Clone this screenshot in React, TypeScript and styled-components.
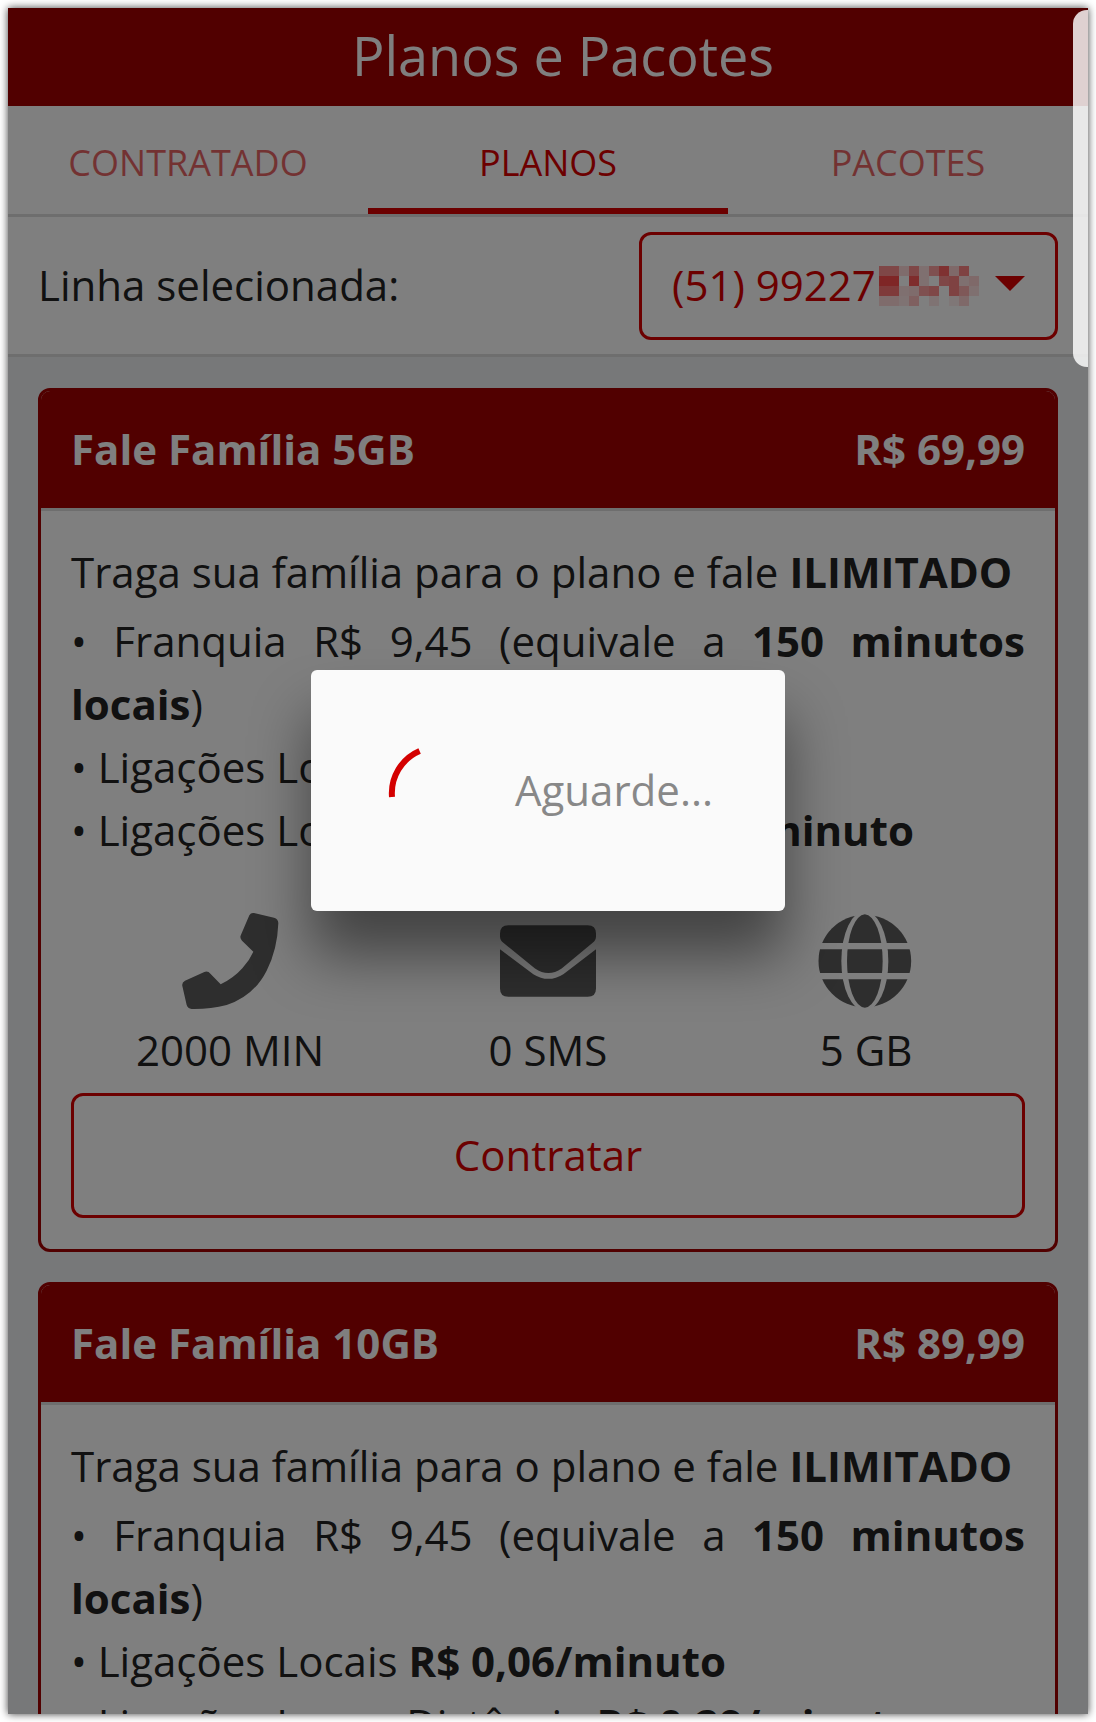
import React from "react";
import styled, { createGlobalStyle } from "styled-components";

const Global = createGlobalStyle`
  html, body { margin: 0; padding: 0; background: #fff; }
  body { padding: 8px; height: 1722px; overflow: hidden; font-family: "Open Sans", "Noto Sans", sans-serif; color: #222; }
  * { box-sizing: border-box; }
`;

const PRIMARY = "#d80000";

const Frame = styled.div`
  position: relative;
  width: 1080px;
  height: 1706px;
  overflow: hidden;
  background: #eef0f2;
  box-shadow: 0 0 8px rgba(0, 0, 0, 0.75);
`;
const TitleBar = styled.header`
  height: 98px;
  background: #a20000;
  color: #fff;
  display: flex;
  align-items: center;
  justify-content: center;
  font-size: 54px;
  font-weight: 400;
  padding-left: 30px;
  padding-bottom: 4px;
`;
const Tabs = styled.nav`
  display: grid;
  grid-template-columns: repeat(3, 1fr);
  height: 111px;
  background: #fff;
  border-bottom: 3px solid #ddd;
`;
const Tab = styled.div<{ $active?: boolean }>`
  display: flex;
  align-items: center;
  justify-content: center;
  padding-top: 11px;
  font-size: 36px;
  color: ${PRIMARY};
  opacity: ${(p) => (p.$active ? 1 : 0.6)};
  border-bottom: 6px solid ${(p) => (p.$active ? PRIMARY : "transparent")};
  height: 108px;
`;
const LineRow = styled.section`
  height: 140px;
  background: #fff;
  border-bottom: 3px solid #ddd;
  display: flex;
  align-items: center;
  justify-content: space-between;
  padding: 0 30px;
  font-size: 42px;
`;
const RowLabel = styled.span`
  padding-bottom: 2px;
`;
const LineSelect = styled.div`
  width: 419px;
  height: 108px;
  border: 3px solid ${PRIMARY};
  border-radius: 12px;
  display: flex;
  align-items: center;
  padding: 0 30px;
  color: ${PRIMARY};
  font-size: 42px;
`;
const SelectText = styled.span`
  padding-bottom: 2px;
`;
const Mosaic = styled.svg`
  margin-left: 3px;
  width: 100px;
  height: 40px;
  flex: none;
`;
const Caret = styled.div`
  margin-left: auto;
  width: 0;
  height: 0;
  border-left: 15px solid transparent;
  border-right: 15px solid transparent;
  border-top: 15px solid ${PRIMARY};
  margin-top: -4px;
`;
const Cards = styled.main`
  padding: 31px 30px 0;
  display: flex;
  flex-direction: column;
  gap: 30px;
`;
const Card = styled.article`
  border-radius: 12px;
  overflow: hidden;
  border: 3px solid #a20000;
  background: #fff;
`;
const CardHead = styled.div`
  height: 120px;
  margin-top: -3px;
  background: #a20000;
  color: #fff;
  font-size: 42px;
  font-weight: 700;
  display: flex;
  align-items: center;
  justify-content: space-between;
  padding: 0 30px;
`;
const CardBody = styled.div`
  padding: 29px 30px 31px;
  border-top: 3px solid #ddd;
`;
const Line = styled.p<{ $just?: boolean }>`
  margin: 0;
  font-size: 42px;
  line-height: 63px;
  text-align: ${(p) => (p.$just ? "justify" : "left")};
`;
const Gap = styled.div`
  height: 6px;
`;
const Stats = styled.div`
  display: grid;
  grid-template-columns: repeat(3, 1fr);
  margin-top: 51px;
`;
const Stat = styled.div`
  display: flex;
  flex-direction: column;
  align-items: center;
  font-size: 42px;
  line-height: 54px;
`;
const IconBox = styled.div`
  height: 96px;
  margin-bottom: 15px;
  display: flex;
  align-items: center;
`;
const MailSvg = styled.svg`
  margin-top: 2px;
`;
const GlobeSvg = styled.svg`
  margin: 2px 2px 0 0;
`;
const Contratar = styled.button`
  display: block;
  width: 100%;
  height: 125px;
  margin-top: 16px;
  padding: 0 0 2px;
  background: transparent;
  border: 3px solid ${PRIMARY};
  border-radius: 12px;
  color: ${PRIMARY};
  font: 400 42px "Open Sans", sans-serif;
`;
const Overlay = styled.div`
  position: absolute;
  inset: 0;
  background: rgba(0, 0, 0, 0.5);
`;
const Scrollbar = styled.div`
  position: absolute;
  top: 2px;
  right: 0;
  width: 15px;
  height: 357px;
  background: rgba(255, 255, 255, 0.82);
  border-radius: 14px 0 0 14px;
`;
const Dialog = styled.div`
  position: absolute;
  left: 303px;
  top: 662px;
  width: 474px;
  height: 241px;
  background: #fafafa;
  border-radius: 6px;
  box-shadow: 0 45px 60px rgba(0, 0, 0, 0.48);
  display: flex;
  align-items: center;
  padding-left: 75px;
`;
const Spinner = styled.svg`
  width: 96px;
  height: 96px;
  flex: none;
`;
const Wait = styled.div`
  margin-left: 33px;
  padding-bottom: 2px;
  color: #888;
  font-size: 42px;
  font-weight: 400;
`;

const PhoneIcon = () => (
  <svg width="100" height="100" viewBox="30 30 300 300">
    <path
      fill="#5c5c5c"
      d="M252 39 L312 53 Q325 57 325 70 Q322 150 290 212 Q250 290 170 315 Q120 328 65 327 Q53 326 50 315 L37 258 Q35 247 45 242 L103 216 Q114 212 122 222 L152 253 Q190 235 217 205 Q238 182 250 155 L216 122 Q208 113 213 104 L238 46 Q243 37 252 39 Z"
    />
  </svg>
);
const MailIcon = () => (
  <MailSvg width="96" height="72" viewBox="60 75 288 215">
    <path
      fill="#5c5c5c"
      d="M85 75 H323 Q348 75 348 100 V108 Q348 120 338 128 L245 205 Q205 232 165 205 L70 128 Q60 120 60 108 V100 Q60 75 85 75 Z"
    />
    <path
      fill="#5c5c5c"
      d="M60 147 L160 222 Q205 250 250 222 L348 147 V265 Q348 290 323 290 H85 Q60 290 60 265 Z"
    />
  </MailSvg>
);
const GlobeIcon = () => (
  <GlobeSvg width="94" height="94" viewBox="54 41 280 282">
    <circle cx="193.5" cy="182" r="139" fill="#5c5c5c" />
    <ellipse cx="193.5" cy="182" rx="70.5" ry="150" fill="#fff" />
    <ellipse cx="193.5" cy="182" rx="53.5" ry="140" fill="#5c5c5c" />
    <path d="M50 137.5 H340 M50 227.5 H340" stroke="#fff" strokeWidth="19" />
  </GlobeSvg>
);

const Blocks: number[][] = [
  [0.5, 0.5, 0.17, 0.5, 0.14, 0.42, 0.7, 0.2, 0.55, 0],
  [0.8, 0.8, 0, 0.75, 0.14, 0, 0.5, 0.55, 0.14, 0.2],
  [0.62, 0.62, 0.14, 0.17, 0.42, 0.5, 0, 0.55, 0.35, 0.14],
  [0.17, 0.17, 0.11, 0.28, 0, 0.11, 0, 0.07, 0.2, 0],
];

const Mask = () => (
  <Mosaic viewBox="0 0 100 40">
    {Blocks.map((row, y) =>
      row.map((o, x) => (
        <rect key={`${x}-${y}`} x={x * 10} y={y * 10} width="10" height="10" fill="#ff2020" fillOpacity={o} />
      ))
    )}
  </Mosaic>
);

const plans = [
  { name: "Fale Família 5GB", price: "R$ 69,99" },
  { name: "Fale Família 10GB", price: "R$ 89,99" },
];

export default function App() {
  return (
    <>
      <Global />
      <Frame>
        <TitleBar>Planos e Pacotes</TitleBar>
        <Tabs>
          <Tab>CONTRATADO</Tab>
          <Tab $active>PLANOS</Tab>
          <Tab>PACOTES</Tab>
        </Tabs>
        <LineRow>
          <RowLabel>Linha selecionada:</RowLabel>
          <LineSelect>
            <SelectText>(51) 99227</SelectText>
            <Mask />
            <Caret />
          </LineSelect>
        </LineRow>
        <Cards>
          {plans.map((p) => (
            <Card key={p.name}>
              <CardHead>
                <span>{p.name}</span>
                <span>{p.price}</span>
              </CardHead>
              <CardBody>
                <Line>
                  Traga sua família para o plano e fale <b>ILIMITADO</b>
                </Line>
                <Gap />
                <Line $just>
                  • Franquia R$ 9,45 (equivale a <b>150 minutos locais</b>)
                </Line>
                <Line>
                  • Ligações Locais <b>R$ 0,06/minuto</b>
                </Line>
                <Line>
                  • Ligações Longa Distância <b>R$ 0,29/minuto</b>
                </Line>
                <Stats>
                  <Stat>
                    <IconBox><PhoneIcon /></IconBox>
                    2000 MIN
                  </Stat>
                  <Stat>
                    <IconBox><MailIcon /></IconBox>
                    0 SMS
                  </Stat>
                  <Stat>
                    <IconBox><GlobeIcon /></IconBox>
                    5 GB
                  </Stat>
                </Stats>
                <Contratar>Contratar</Contratar>
              </CardBody>
            </Card>
          ))}
        </Cards>
        <Overlay>
          <Dialog>
            <Spinner viewBox="0 0 96 96">
              <path d="M33.6 8 A46 46 0 0 0 6 54" fill="none" stroke="#d40000" strokeWidth="6" />
            </Spinner>
            <Wait>Aguarde...</Wait>
          </Dialog>
        </Overlay>
        <Scrollbar />
      </Frame>
    </>
  );
}
